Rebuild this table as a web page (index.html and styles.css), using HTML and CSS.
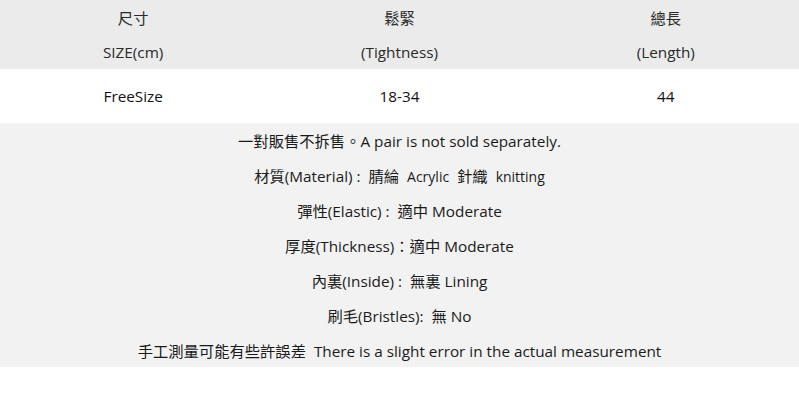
FILE: index.html
```html
<!DOCTYPE html>
<html lang="zh-Hant">
<head>
<meta charset="utf-8">
<link rel="stylesheet" href="styles.css">
</head>
<body>
<table class="size-table">
  <tr class="head"><td>尺寸</td><td>鬆緊</td><td>總長</td></tr>
  <tr class="head"><td>SIZE(cm)</td><td>(Tightness)</td><td>(Length)</td></tr>
  <tr class="data"><td>FreeSize</td><td>18-34</td><td>44</td></tr>
</table>
<div class="notes">
  <p>一對販售不拆售。A pair is not sold separately.</p>
  <p>材質(Material) :&nbsp; 腈綸&nbsp; <span class="small">Acrylic</span>&nbsp; 針織&nbsp; <span class="small">knitting</span></p>
  <p>彈性(Elastic) :&nbsp; 適中 Moderate</p>
  <p>厚度(Thickness)：適中 Moderate</p>
  <p>內裏(Inside) :&nbsp; 無裏 Lining</p>
  <p>刷毛(Bristles):&nbsp; 無 No</p>
  <p>手工測量可能有些許誤差&nbsp; There is a slight error in the actual measurement</p>
</div>
</body>
</html>
```
FILE: styles.css
```css
html, body {
  margin: 0;
  padding: 0;
  background: #ffffff;
}
body {
  font-family: "Open Sans", "Noto Sans CJK TC", sans-serif;
  font-size: 15.3px;
  color: #1a1a1a;
}
.size-table {
  width: 100%;
  border-collapse: collapse;
  table-layout: fixed;
}
.size-table td {
  text-align: center;
  padding: 0;
}
.head {
  background: #ebebeb;
  height: 34.5px;
}
.head td {
  color: #2a2a2a;
}
.data {
  height: 54px;
  background: #ffffff;
}
.data td {
  color: #111111;
}
.notes {
  background: #f2f2f2;
  padding: 1px 0 0;
  height: 243px;
}
.notes p {
  margin: 0;
  height: 35px;
  line-height: 35px;
  text-align: center;
  color: #1a1a1a;
}
.small {
  font-size: 14px;
}
```
